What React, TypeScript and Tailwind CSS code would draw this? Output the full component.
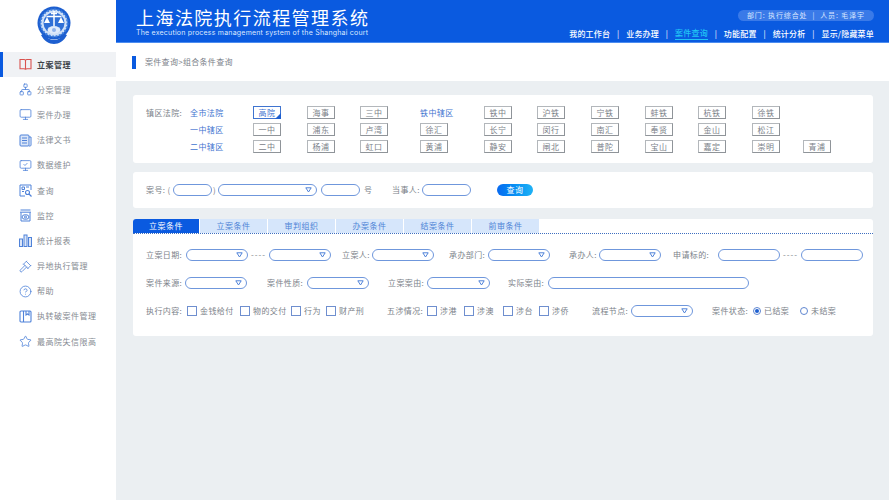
import React from 'react';
import { Network, Gavel, CircleHelp, Star, Monitor, MonitorCheck } from 'lucide-react';

const font = "font-['Noto_Sans_CJK_SC','Noto_Sans',sans-serif]";

const BookIcon = () => (
  <svg width="13" height="13" viewBox="0 0 13 13" fill="none" stroke="#d9534f" strokeWidth="1.1">
    <path d="M1 1.5h4.2c.8 0 1.3.5 1.3 1.2v9c0-.6-.5-1-1.3-1H1zM12 1.5H7.8c-.8 0-1.3.5-1.3 1.2v9c0-.6.5-1 1.3-1H12z" />
  </svg>
);

const DocIcon = () => (
  <svg width="13" height="13" viewBox="0 0 13 13" fill="#dbe6f8" stroke="#4f82d9" strokeWidth="1">
    <rect x="1" y="1" width="9" height="11" rx="1" />
    <path d="M10 3h2v8.200c0 .5-.4.8-1 .8h-1M3 4h5M3 6.500h5M3 9h5" fill="none" />
  </svg>
);

const SearchIcon = () => (
  <svg width="13" height="13" viewBox="0 0 13 13" fill="none" stroke="#4f82d9">
    <path d="M1 1h11v5M1 1v11h5" strokeWidth="1" />
    <path d="M3 3h2.500v2.500H3zM7 3h3M3 7.500h2" strokeWidth="1" />
    <circle cx="8.500" cy="8.500" r="2" strokeWidth="1.100" />
    <path d="M10 10l2.500 2.500" strokeWidth="1.300" />
  </svg>
);

const WatchIcon = () => (
  <svg width="13" height="13" viewBox="0 0 13 13" fill="none" stroke="#4f82d9" strokeWidth="1">
    <path d="M1.500 1h10M1 3.200h11M2 3.500v8.500h9V3.500" />
    <ellipse cx="6.500" cy="8" rx="3.500" ry="2.300" />
    <circle cx="6.500" cy="8" r="1" />
  </svg>
);

const BarsIcon = () => (
  <svg width="13" height="13" viewBox="0 0 13 13" fill="#dbe6f8" stroke="#4f82d9" strokeWidth="1">
    <rect x="0.500" y="5" width="3" height="7.500" />
    <rect x="5" y="1" width="3" height="11.500" />
    <rect x="9.500" y="3.500" width="3" height="9" />
  </svg>
);

const PanelIcon = () => (
  <svg width="13" height="13" viewBox="0 0 13 13" fill="none" stroke="#4f82d9" strokeWidth="1.100">
    <rect x="1" y="1" width="11" height="11" rx="1" />
    <path d="M4.500 1v11M7 1v4l1.500-1L10 5V1" />
  </svg>
);

const lucideProps = { size: 13, color: '#4f82d9', strokeWidth: 1.5 };

const menu: { label: string; icon: React.ReactNode }[] = [
  { label: '立案管理', icon: <BookIcon /> },
  { label: '分案管理', icon: <Network {...lucideProps} /> },
  { label: '案件办理', icon: <Monitor {...lucideProps} /> },
  { label: '法律文书', icon: <DocIcon /> },
  { label: '数据维护', icon: <MonitorCheck {...lucideProps} /> },
  { label: '查询', icon: <SearchIcon /> },
  { label: '监控', icon: <WatchIcon /> },
  { label: '统计报表', icon: <BarsIcon /> },
  { label: '异地执行管理', icon: <Gavel {...lucideProps} /> },
  { label: '帮助', icon: <CircleHelp {...lucideProps} /> },
  { label: '执转破案件管理', icon: <PanelIcon /> },
  { label: '最高院失信限高', icon: <Star {...lucideProps} /> },
];

const navItems = ['我的工作台', '业务办理', '案件查询', '功能配置', '统计分析', '显示/隐藏菜单'];

const courtRows = [
  ['镇区法院:', '全市法院', '高院', '海事', '三中', '铁中辖区', '铁中', '沪铁', '宁铁', '蚌铁', '杭铁', '徐铁', ''],
  ['', '一中辖区', '一中', '浦东', '卢湾', '徐汇', '长宁', '闵行', '南汇', '奉贤', '金山', '松江', ''],
  ['', '二中辖区', '二中', '杨浦', '虹口', '黄浦', '静安', '闸北', '普陀', '宝山', '嘉定', '崇明', '青浦'],
];

const tabs = ['立案条件', '立案条件', '审判组织', '办案条件', '结案条件', '前审条件'];

const Logo = () => (
  <svg width="36" height="40" viewBox="0 0 36 40">
    <circle cx="18" cy="17" r="16.500" fill="#1d5fd0" />
    <path d="M5 29c3 6 8 9 13 9s10-3 13-9l-3-1c-3 4-6 6-10 6s-7-2-10-6z" fill="#1d5fd0" />
    <circle cx="18" cy="17" r="13.500" fill="#cfe0f8" />
    <circle cx="18" cy="17" r="13.500" fill="none" stroke="#3f7fdc" strokeWidth="2" strokeDasharray="2 1.500" />
    <circle cx="18" cy="17" r="10.500" fill="#2f6fd6" />
    <path d="M18 5v15M10.500 10.500h15M15 7.500h6" stroke="#fff" strokeWidth="1.500" />
    <path d="M11 11l-3 6h6zM25 11l-3 6h6z" fill="#fff" />
    <ellipse cx="18" cy="24" rx="6.500" ry="4" fill="#dfeafa" />
    <circle cx="18" cy="24" r="2" fill="#8fb2ea" />
  </svg>
);

const Label = ({ text, className = '' }: { text: string; className?: string }) => (
  <span className={`shrink-0 whitespace-nowrap text-[8px] leading-[12px] tracking-[0.4px] text-[#7b8189] ${className}`}>{text}</span>
);

const Field = ({ className = 'w-[62px]', arrow = false }: { className?: string; arrow?: boolean }) => (
  <div className={`flex h-[12px] shrink-0 items-center justify-end rounded-full border border-[#6f97dc] bg-white pr-[4px] ${className}`}>
    {arrow && (
      <svg width="7" height="6" viewBox="0 0 7 6" fill="none" stroke="#4f82d9" strokeWidth="1">
        <path d="M0.800 0.800h5.400L3.500 5z" />
      </svg>
    )}
  </div>
);

const Dash = () => <span className="w-[21px] shrink-0 text-center text-[8px] leading-[12px] tracking-[1px] text-[#7b8189]">----</span>;

const Check = ({ text, className }: { text: string; className: string }) => (
  <div className={`flex shrink-0 items-center gap-[3px] ${className}`}>
    <span className="h-[10px] w-[10px] shrink-0 border border-[#6f8fcf] bg-white" />
    <Label text={text} />
  </div>
);

const Radio = ({ text, checked, className = '' }: { text: string; checked?: boolean; className?: string }) => (
  <div className={`flex shrink-0 items-center gap-[3px] ${className}`}>
    <span className="flex h-[8px] w-[8px] items-center justify-center rounded-full border border-[#5f86d0] bg-white">
      {checked && <span className="h-[4px] w-[4px] rounded-full bg-[#1d5fd0]" />}
    </span>
    <Label text={text} className="tracking-[0.2px]" />
  </div>
);

const CourtCell = ({ text, col }: { text: string; col: number }) => {
  if (!text) return <span />;
  if (col === 0) return <Label text={text} className="pt-px" />;
  if (text.endsWith('辖区') || text === '全市法院') {
    return <span className="whitespace-nowrap pt-px text-[8px] leading-[12px] tracking-[0.4px] text-[#3f74d0]">{text}</span>;
  }
  const active = text === '高院';
  return (
    <div
      className={`relative flex h-[13px] w-[28px] items-center justify-center border bg-white text-[8px] tracking-[0.4px] ${
        active ? 'border-[#3f74d0] text-[#3f74d0]' : 'border-[#b3b7bb] border-r-[#8f9499] border-b-[#8f9499] text-[#7b8189]'
      }`}
    >
      {text}
      {active && (
        <svg className="absolute -bottom-px -right-px" width="6" height="6" viewBox="0 0 6 6">
          <path d="M6 0v6H0z" fill="#1d5fd0" />
        </svg>
      )}
    </div>
  );
};

export default function App() {
  return (
    <div className={`flex h-[500px] w-[889px] overflow-hidden bg-[#ebeff2] ${font}`}>
      <aside className="w-[116px] shrink-0 bg-white">
        <div className="flex h-[52px] justify-center pt-[6px] pr-[8px]">
          <Logo />
        </div>
        {menu.map((item, i) => (
          <div
            key={i}
            className={`flex h-[25.200px] items-center gap-[5px] ${
              i === 0 ? 'border-l-[3px] border-[#0a5ae0] bg-[#f0f2f5] pl-[16px]' : 'pl-[19px]'
            }`}
          >
            <span className="flex h-[13px] w-[13px] shrink-0 items-center justify-center">{item.icon}</span>
            <span className={`whitespace-nowrap text-[8px] tracking-[0.5px] ${i === 0 ? 'font-bold text-[#3d4248]' : 'text-[#868b92]'}`}>{item.label}</span>
          </div>
        ))}
      </aside>

      <div className="flex min-w-0 flex-1 flex-col">
        <header className="flex h-[43px] shrink-0 justify-between border-b border-[#4d8df0] bg-[#0a5ae0] pr-[15px] pl-[20px] text-white">
          <div className="pt-[6px]">
            <div className="whitespace-nowrap text-[18px] leading-[22px] tracking-[1.450px]">上海法院执行流程管理系统</div>
            <div className="mt-[1px] whitespace-nowrap font-['Inter'] text-[7px] leading-[8px] tracking-[0.210px] text-[#dce8ff]">
              The execution process management system of the Shanghai court
            </div>
          </div>
          <div className="flex flex-col items-end pt-[10px]">
            <div className="flex h-[11px] items-center whitespace-nowrap rounded-full bg-[#3a7ae8] pr-[9px] pl-[9px] text-[7px] tracking-[0.900px] text-[#dbe7ff]">
              部门: 执行综合处 &nbsp;|&nbsp; 人员: 毛泽宇
            </div>
            <nav className="mt-[6px] flex items-center text-[8px] font-medium leading-[12px] tracking-[0.200px]">
              {navItems.map((n, i) => (
                <React.Fragment key={n}>
                  {i > 0 && <span className="w-[16px] text-center font-normal">|</span>}
                  <span className={`whitespace-nowrap ${i === 2 ? 'border-b border-[#21c4f5] text-[#21c4f5]' : ''}`}>{n}</span>
                </React.Fragment>
              ))}
            </nav>
          </div>
        </header>

        <div className="flex h-[38px] shrink-0 items-center bg-white pl-[16px]">
          <span className="h-[13px] w-[4px] bg-[#0a5ae0]" />
          <span className="ml-[9px] text-[8px] tracking-[0.300px] text-[#7b8189]">案件查询&gt;组合条件查询</span>
        </div>

        <main className="flex flex-col pt-[14px] pr-[16px] pl-[17px]">
          <section className="h-[68px] rounded-[3px] bg-white pt-[11px] pl-[13px]">
            <div className="grid grid-cols-[44px_63px_54px_53px_60px_64px_53px_54px_54px_53px_54px_51px_28px] gap-y-[4px]">
              {courtRows.map((row, r) =>
                row.map((cell, c) => <CourtCell key={`${r}-${c}`} text={cell} col={c} />),
              )}
            </div>
          </section>

          <section className="mt-[9px] flex h-[36px] items-center rounded-[3px] bg-white pl-[13px]">
            <Label text="案号: (" className="w-[27px]" />
            <Field className="w-[39px]" />
            <Label text=")" className="w-[6px] pl-[1px]" />
            <Field className="w-[99px]" arrow />
            <Field className="ml-[4px] w-[39px]" />
            <Label text="号" className="ml-[4px] w-[8px]" />
            <Label text="当事人:" className="ml-[20px] w-[30px]" />
            <Field className="w-[49px]" />
            <button className="ml-[26px] h-[12px] w-[36px] rounded-full bg-gradient-to-r from-[#0a6af0] to-[#1fb2f5] text-[8px] leading-[12px] tracking-[0.4px] text-white">查询</button>
          </section>

          <section className="mt-[11px] h-[117px] overflow-hidden rounded-[3px] bg-white">
            <div className="flex h-[15px] border-b border-dotted border-[#3f6fc0]">
              {tabs.map((t, i) => (
                <div
                  key={i}
                  className={`flex items-center justify-center border-r border-white text-[8px] tracking-[0.5px] ${
                    i === 0 ? 'w-[67px] bg-[#0a5ae0] text-white' : 'w-[68px] bg-[#d6e6fb] text-[#4d83d6]'
                  }`}
                >
                  {t}
                </div>
              ))}
            </div>

            <div className="flex flex-col gap-[16px] pt-[15px] pl-[13px]">
              <div className="flex items-center">
                <Label text="立案日期:" className="w-[40px]" />
                <Field arrow />
                <Dash />
                <Field arrow />
                <Label text="立案人:" className="ml-[11px] w-[30px]" />
                <Field arrow />
                <Label text="承办部门:" className="ml-[15px] w-[39px]" />
                <Field arrow />
                <Label text="承办人:" className="ml-[19px] w-[30px]" />
                <Field arrow />
                <Label text="申请标的:" className="ml-[12px] w-[45px]" />
                <Field />
                <Dash />
                <Field />
              </div>

              <div className="flex items-center">
                <Label text="案件来源:" className="w-[39px]" />
                <Field arrow />
                <Label text="案件性质:" className="ml-[20px] w-[40px]" />
                <Field arrow />
                <Label text="立案案由:" className="ml-[19px] w-[39px]" />
                <Field className="w-[63px]" arrow />
                <Label text="实际案由:" className="ml-[18px] w-[40px]" />
                <Field className="w-[201px]" />
              </div>

              <div className="flex items-center">
                <Label text="执行内容:" className="w-[41px]" />
                <Check text="金钱给付" className="w-[53px]" />
                <Check text="物的交付" className="w-[51px]" />
                <Check text="行为" className="w-[35px]" />
                <Check text="财产刑" className="w-[36px]" />
                <Label text="五涉情况:" className="ml-[25px] w-[40px]" />
                <Check text="涉港" className="w-[37px]" />
                <Check text="涉澳" className="w-[39px]" />
                <Check text="涉台" className="w-[36px]" />
                <Check text="涉侨" className="w-[30px]" />
                <Label text="流程节点:" className="ml-[23px] w-[39px]" />
                <Field arrow />
                <Label text="案件状态:" className="ml-[19px] w-[41px]" />
                <Radio text="已结案" checked className="w-[47px]" />
                <Radio text="未结案" />
              </div>
            </div>
          </section>
        </main>
      </div>
    </div>
  );
}
